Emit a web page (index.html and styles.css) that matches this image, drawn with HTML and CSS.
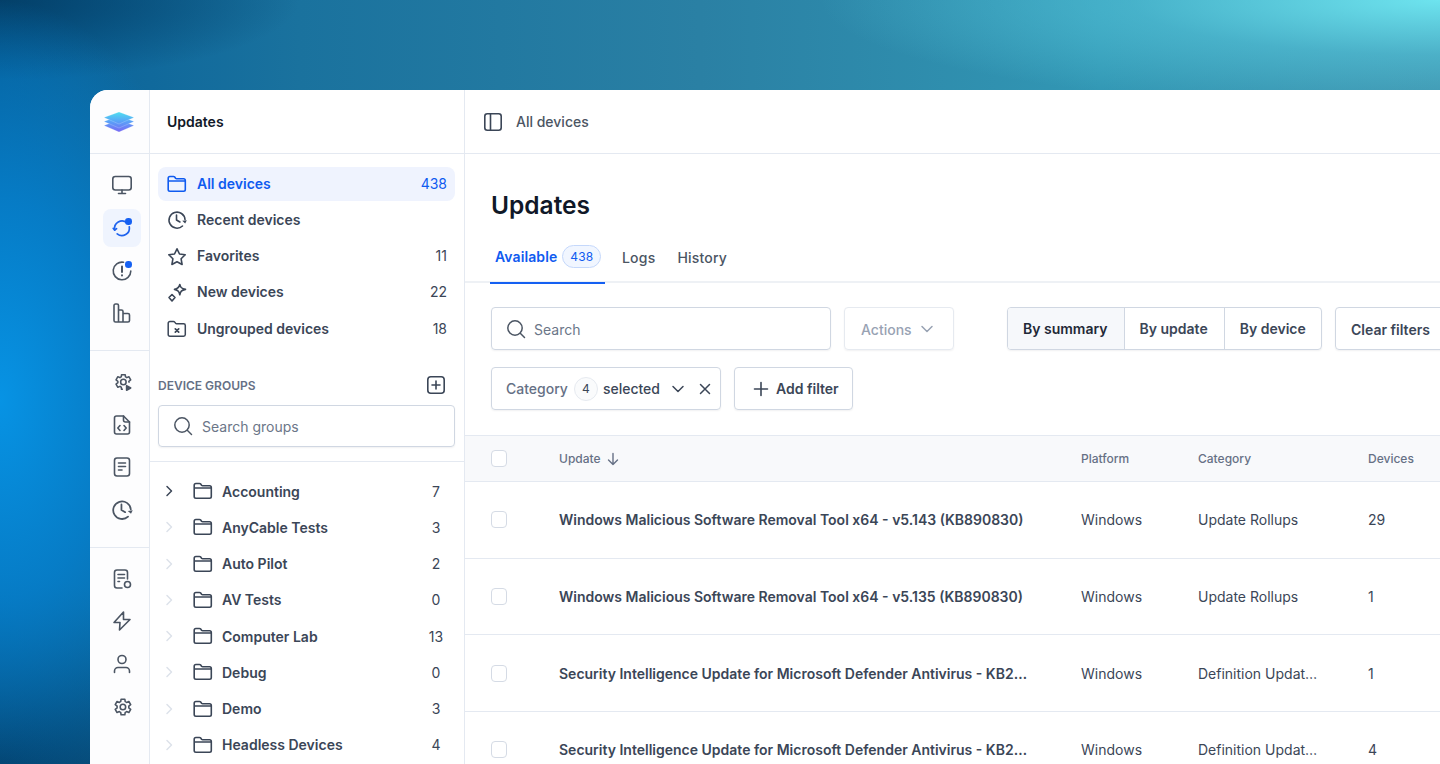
FILE: index.html
```html
<!DOCTYPE html>
<html lang="en">
<head>
    <meta charset="utf-8">
    <title>Updates</title>
    <link rel="stylesheet" href="styles.css">
</head>

<body>
    <svg class="sprite" width="0" height="0">
        <symbol id="folder" viewBox="0 0 20 20"><path d="M1.2 4.2c0-1 .8-1.7 1.7-1.7h3.5c.5 0 1 .2 1.3.6l1 1.3c.2.3.5.4.9.4h7c1 0 1.700.8 1.700 1.700v9c0 1-.8 1.700-1.700 1.700H2.900c-1 0-1.700-.8-1.700-1.700z M1.200 7h17.600" fill="none" stroke="currentColor" stroke-width="1.600"/></symbol>
        <symbol id="chev" viewBox="0 0 12 12"><path d="M4 1.500 8.500 6 4 10.500" fill="none" stroke="currentColor" stroke-width="1.500" stroke-linecap="round" stroke-linejoin="round"/></symbol>
        <symbol id="down" viewBox="0 0 14 14"><path d="M2 4.500 7 9.500l5-5" fill="none" stroke="currentColor" stroke-width="1.500" stroke-linecap="round" stroke-linejoin="round"/></symbol>
        <symbol id="search" viewBox="0 0 20 20"><circle cx="9" cy="9" r="7.200" fill="none" stroke="currentColor" stroke-width="1.500"/><path d="m14.500 14.500 4 4" fill="none" stroke="currentColor" stroke-width="1.500" stroke-linecap="round"/></symbol>
        <symbol id="clock" viewBox="0 0 20 20"><path d="M18 9.500A8 8 0 1 0 15.500 16M9.500 5v5l3.400 2" fill="none" stroke="currentColor" stroke-width="1.600" stroke-linecap="round" stroke-linejoin="round"/><path d="m15.200 10.800 3 2.600 1.600-3.200z" fill="currentColor"/></symbol>
        <linearGradient id="logo-fill" gradientUnits="userSpaceOnUse" x1="0" y1="1" x2="0" y2="21"><stop offset="0" stop-color="#4fe0f0"/><stop offset=".5" stop-color="#5a9ff8"/><stop offset="1" stop-color="#7868f4"/></linearGradient>
    </svg>

    <div class="page">
        <div class="app">

            <div class="rail">
                <div class="rail-logo">
                    <svg width="30" height="22" viewBox="0 0 30 22" fill="url(#logo-fill)" stroke="#fff" stroke-opacity=".5" stroke-width=".4">
                        <path d="M15 9 30 14.500 15 21 0 14.500z"/>
                        <path d="M15 5 30 10.500 15 17 0 10.500z"/>
                        <path d="M15 1 30 6.500 15 13 0 6.500z"/>
                    </svg>
                </div>
                <div class="rail-group">
                    <div class="rail-btn">
                        <svg width="22" height="22" viewBox="0 0 22 22" fill="none" stroke="currentColor" stroke-width="1.600" stroke-linecap="round"><rect x="1.800" y="2.500" width="18.400" height="13.500" rx="2.500"/><path d="M11 16v3.500M7.500 19.500h7"/></svg>
                    </div>
                    <div class="rail-btn is-active">
                        <svg width="22" height="22" viewBox="0 0 22 22" fill="none" stroke="currentColor" stroke-width="1.700" stroke-linecap="round" stroke-linejoin="round"><path d="M15.800 5.600A7.500 7.500 0 0 0 3.700 12.800"/><path d="M6.200 16.900A7.500 7.500 0 0 0 18.300 9.800"/><path d="M2.200 11.300 3.700 13.200l1.900-1.500"/></svg>
                        <span class="dot"></span>
                    </div>
                    <div class="rail-btn">
                        <svg width="22" height="22" viewBox="0 0 22 22" fill="none" stroke="currentColor" stroke-width="1.600" stroke-linecap="round"><path d="M19.800 11A8.800 8.800 0 1 1 12.500 2.300"/><path d="M11 6.500v5.500M11 15.300v.2" stroke-width="2"/></svg>
                        <span class="dot"></span>
                    </div>
                    <div class="rail-btn">
                        <svg width="22" height="22" viewBox="0 0 22 22" fill="none" stroke="currentColor" stroke-width="1.600" stroke-linejoin="round"><path d="M3 3.500c0-.8.600-1.500 1.500-1.500h1.500c.9 0 1.500.7 1.500 1.500V20H4.500C3.600 20 3 19.300 3 18.500zM7.500 8h3c.9 0 1.500.7 1.500 1.500V20H7.500zM12 11.500h5c.9 0 1.500.7 1.500 1.500v5.500c0 .8-.6 1.500-1.500 1.500h-5z"/></svg>
                    </div>
                </div>
                <div class="rail-group">
                    <div class="rail-btn">
                        <svg width="22" height="22" viewBox="0 0 24 24" fill="none" stroke="currentColor" stroke-width="1.700" stroke-linejoin="round"><path d="M19.500 12.800c.1-.5.100-1.100 0-1.600l2-1.500-2-3.500-2.300 1a8 8 0 0 0-1.400-.8L15.500 4h-4l-.3 2.400a8 8 0 0 0-1.400.8l-2.300-1-2 3.500 2 1.500a6 6 0 0 0 0 1.600l-2 1.500 2 3.500 2.300-1c.4.300.9.600 1.400.8l.3 2.400H13"/><circle cx="13.500" cy="12" r="3"/><path d="M17 16v5l4.500-2.500z" fill="currentColor"/></svg>
                    </div>
                    <div class="rail-btn">
                        <svg width="22" height="22" viewBox="0 0 22 22" fill="none" stroke="currentColor" stroke-width="1.600" stroke-linecap="round" stroke-linejoin="round"><path d="M3.500 4c0-1.100.9-2 2-2h7l6 6v10c0 1.100-.9 2-2 2h-11c-1.100 0-2-.9-2-2z"/><path d="M12.500 2v4c0 1.100.9 2 2 2h4M9 11.500 6.800 14 9 16.500M13 11.500l2.200 2.500-2.200 2.500"/></svg>
                    </div>
                    <div class="rail-btn">
                        <svg width="22" height="22" viewBox="0 0 22 22" fill="none" stroke="currentColor" stroke-width="1.600" stroke-linecap="round"><rect x="3.500" y="2" width="15" height="18" rx="2.500"/><path d="M7.500 7h7M7.500 10.500h7M7.500 14h3.500"/></svg>
                    </div>
                    <div class="rail-btn"><svg width="22" height="22"><use href="#clock"/></svg></div>
                </div>
                <div class="rail-group">
                    <div class="rail-btn">
                        <svg width="22" height="22" viewBox="0 0 22 22" fill="none" stroke="currentColor" stroke-width="1.600" stroke-linecap="round"><path d="M11 20H6c-1.400 0-2.500-1-2.500-2.500v-13C3.500 3 4.600 2 6 2h8c1.400 0 2.500 1 2.500 2.500V11"/><path d="M7 6.500h6.500M7 10h6.500M7 13.500h1.500"/><circle cx="16.500" cy="16.500" r="3"/></svg>
                    </div>
                    <div class="rail-btn">
                        <svg width="22" height="22" viewBox="0 0 22 22" fill="none" stroke="currentColor" stroke-width="1.600" stroke-linejoin="round"><path d="M12.500 2 3 12.500h6L8.500 20 19 9.500h-6.500z"/></svg>
                    </div>
                    <div class="rail-btn">
                        <svg width="22" height="22" viewBox="0 0 22 22" fill="none" stroke="currentColor" stroke-width="1.600" stroke-linecap="round"><circle cx="11" cy="6.500" r="4"/><path d="M3.500 19.500v-1.500c0-2 1.600-3.500 3.500-3.500h8c1.900 0 3.500 1.500 3.500 3.500v1.500"/></svg>
                    </div>
                    <div class="rail-btn">
                        <svg width="22" height="22" viewBox="0 0 24 24" fill="none" stroke="currentColor" stroke-width="1.700" stroke-linejoin="round"><path d="M19.400 12.900a7 7 0 0 0 0-1.800l2.100-1.600-2-3.500-2.500 1a8 8 0 0 0-1.500-.9L15.100 3.500H11l-.4 2.600c-.5.200-1 .5-1.500.9l-2.500-1-2 3.500 2.100 1.600a7 7 0 0 0 0 1.800l-2.100 1.600 2 3.500 2.500-1c.5.400 1 .7 1.500.9l.4 2.600h4.100l.4-2.600c.5-.2 1-.5 1.500-.9l2.500 1 2-3.500z"/><circle cx="13" cy="12" r="3"/></svg>
                    </div>
                </div>
            </div>

            <div class="side">
                <div class="side-head">Updates</div>
                <ul class="nav">
                    <li class="nav-item is-active"><svg class="nav-ico" width="20" height="20"><use href="#folder"/></svg><span class="grow">All devices</span><span class="count">438</span></li>
                    <li class="nav-item"><svg class="nav-ico" width="20" height="20"><use href="#clock"/></svg><span class="grow">Recent devices</span></li>
                    <li class="nav-item">
                        <svg class="nav-ico" width="20" height="20" viewBox="0 0 20 20" fill="none" stroke="currentColor" stroke-width="1.600" stroke-linejoin="round"><path d="m10 1.800 2.500 5.200 5.700.8-4.100 4 1 5.700L10 14.800l-5.100 2.700 1-5.700-4.100-4 5.700-.8z"/></svg>
                        <span class="grow">Favorites</span><span class="count">11</span>
                    </li>
                    <li class="nav-item">
                        <svg class="nav-ico" width="20" height="20" viewBox="0 0 20 20" fill="none" stroke="currentColor" stroke-width="1.600" stroke-linejoin="round"><path d="M12.800 1.500c.6 3 1.700 4.100 5.700 4.900-4 .8-5.100 1.900-5.700 5.400-.6-3.500-1.700-4.600-5.300-5.400 3.600-.8 4.700-1.900 5.300-4.900z"/><path d="m5 11.500 3 3-3 3.500-3-3.500z"/></svg>
                        <span class="grow">New devices</span><span class="count">22</span>
                    </li>
                    <li class="nav-item">
                        <svg class="nav-ico" width="20" height="20" viewBox="0 0 20 20" fill="none" stroke="currentColor" stroke-width="1.500" stroke-linecap="round"><path d="M1.200 4.200c0-1 .8-1.700 1.700-1.700h3.500c.5 0 1 .2 1.300.6l1 1.300c.2.300.5.400.9.400h7c1 0 1.700.8 1.700 1.700v9c0 1-.8 1.700-1.700 1.700H2.900c-1 0-1.700-.8-1.700-1.700z"/><path d="m8.300 9.800 3.400 3.400m0-3.400-3.400 3.400" stroke-width="1.700"/></svg>
                        <span class="grow">Ungrouped devices</span><span class="count">18</span>
                    </li>
                </ul>

                <div class="groups-head">
                    <span class="grow">DEVICE GROUPS</span>
                    <svg width="20" height="20" viewBox="0 0 20 20" fill="none" stroke="currentColor" stroke-width="1.600" stroke-linecap="round"><rect x="1.800" y="1.800" width="16.400" height="16.400" rx="3"/><path d="M10 6v8M6 10h8"/></svg>
                </div>
                <div class="groups-search">
                    <div class="field"><svg class="field-ico" width="20" height="20"><use href="#search"/></svg><span>Search groups</span></div>
                </div>
                <ul class="tree">
                    <li class="tree-row"><svg class="chev is-open" width="12" height="12"><use href="#chev"/></svg><svg class="nav-ico" width="20" height="20"><use href="#folder"/></svg><span class="grow">Accounting</span><span class="tree-count">7</span></li>
                    <li class="tree-row"><svg class="chev" width="12" height="12"><use href="#chev"/></svg><svg class="nav-ico" width="20" height="20"><use href="#folder"/></svg><span class="grow">AnyCable Tests</span><span class="tree-count">3</span></li>
                    <li class="tree-row"><svg class="chev" width="12" height="12"><use href="#chev"/></svg><svg class="nav-ico" width="20" height="20"><use href="#folder"/></svg><span class="grow">Auto Pilot</span><span class="tree-count">2</span></li>
                    <li class="tree-row"><svg class="chev" width="12" height="12"><use href="#chev"/></svg><svg class="nav-ico" width="20" height="20"><use href="#folder"/></svg><span class="grow">AV Tests</span><span class="tree-count">0</span></li>
                    <li class="tree-row"><svg class="chev" width="12" height="12"><use href="#chev"/></svg><svg class="nav-ico" width="20" height="20"><use href="#folder"/></svg><span class="grow">Computer Lab</span><span class="tree-count">13</span></li>
                    <li class="tree-row"><svg class="chev" width="12" height="12"><use href="#chev"/></svg><svg class="nav-ico" width="20" height="20"><use href="#folder"/></svg><span class="grow">Debug</span><span class="tree-count">0</span></li>
                    <li class="tree-row"><svg class="chev" width="12" height="12"><use href="#chev"/></svg><svg class="nav-ico" width="20" height="20"><use href="#folder"/></svg><span class="grow">Demo</span><span class="tree-count">3</span></li>
                    <li class="tree-row"><svg class="chev" width="12" height="12"><use href="#chev"/></svg><svg class="nav-ico" width="20" height="20"><use href="#folder"/></svg><span class="grow">Headless Devices</span><span class="tree-count">4</span></li>
                </ul>
            </div>

            <div class="main">
                <div class="main-head">
                    <svg width="20" height="20" viewBox="0 0 20 20" fill="none" stroke="currentColor" stroke-width="1.600"><rect x="1.800" y="1.800" width="16.400" height="16.400" rx="2.500"/><path d="M7.500 1.800v16.400"/></svg>
                    <span>All devices</span>
                </div>

                <h1 class="title">Updates</h1>

                <div class="tabs">
                    <div class="tab is-active">Available <span class="tab-badge">438</span></div>
                    <div class="tab">Logs</div>
                    <div class="tab">History</div>
                </div>

                <div class="toolbar">
                    <div class="field field-main"><svg class="field-ico" width="20" height="20"><use href="#search"/></svg><span>Search</span></div>
                    <div class="btn btn-off">Actions <svg width="14" height="14"><use href="#down"/></svg></div>
                    <div class="seg">
                        <div class="seg-item is-on">By summary</div>
                        <div class="seg-item">By update</div>
                        <div class="seg-item">By device</div>
                    </div>
                    <div class="btn btn-clear">Clear filters</div>
                </div>

                <div class="filters">
                    <div class="btn btn-filter">
                        <span class="muted">Category</span><span class="circle">4</span><span>selected</span>
                        <svg class="f-down" width="14" height="14"><use href="#down"/></svg>
                        <svg width="12" height="12" viewBox="0 0 12 12" fill="none" stroke="currentColor" stroke-width="1.500" stroke-linecap="round"><path d="m1.500 1.500 9 9m0-9-9 9"/></svg>
                    </div>
                    <div class="btn btn-add">
                        <svg width="16" height="16" viewBox="0 0 16 16" fill="none" stroke="currentColor" stroke-width="1.600" stroke-linecap="round"><path d="M8 1.500v13M1.500 8h13"/></svg>
                        Add filter
                    </div>
                </div>

                <div class="table">
                    <div class="t-row t-head">
                        <div class="t-check"><span class="box"></span></div>
                        <div class="t-sort">Update <svg width="14" height="14" viewBox="0 0 14 14" fill="none" stroke="currentColor" stroke-width="1.400" stroke-linecap="round" stroke-linejoin="round"><path d="M7 1.500v11M2.500 8 7 12.500 11.500 8"/></svg></div>
                        <div>Platform</div>
                        <div>Category</div>
                        <div>Devices</div>
                    </div>
                    <div class="t-row">
                        <div class="t-check"><span class="box"></span></div>
                        <div class="t-name">Windows Malicious Software Removal Tool x64 - v5.143 (KB890830)</div>
                        <div>Windows</div>
                        <div>Update Rollups</div>
                        <div>29</div>
                    </div>
                    <div class="t-row">
                        <div class="t-check"><span class="box"></span></div>
                        <div class="t-name">Windows Malicious Software Removal Tool x64 - v5.135 (KB890830)</div>
                        <div>Windows</div>
                        <div>Update Rollups</div>
                        <div>1</div>
                    </div>
                    <div class="t-row">
                        <div class="t-check"><span class="box"></span></div>
                        <div class="t-name">Security Intelligence Update for Microsoft Defender Antivirus - KB2…</div>
                        <div>Windows</div>
                        <div>Definition Updat…</div>
                        <div>1</div>
                    </div>
                    <div class="t-row">
                        <div class="t-check"><span class="box"></span></div>
                        <div class="t-name">Security Intelligence Update for Microsoft Defender Antivirus - KB2…</div>
                        <div>Windows</div>
                        <div>Definition Updat…</div>
                        <div>4</div>
                    </div>
                </div>
            </div>

        </div>
    </div>
</body>
</html>
```

FILE: styles.css
```css
* { box-sizing: border-box; }

body {
    margin: 0;
    font-family: Inter, "Liberation Sans", sans-serif;
    font-size: 14px;
    color: #3b4657;
}

ul { list-style: none; margin: 0; padding: 0; }

.sprite { position: absolute; }

.grow { flex: 1; }

.page {
    width: 1440px;
    height: 764px;
    overflow: hidden;
    padding: 90px 0 0 90px;
    background:
        radial-gradient(ellipse 620px 110px at 1440px 0, rgba(112, 232, 242, .95) 0%, rgba(90, 205, 225, .5) 50%, rgba(70, 170, 200, 0) 100%),
        radial-gradient(ellipse 230px 400px at 0 400px, #0793e4 0%, rgba(6, 128, 205, .85) 50%, rgba(5, 100, 160, 0) 100%),
        radial-gradient(ellipse 300px 80px at 0 0, rgba(3, 58, 96, .85) 0%, rgba(3, 58, 96, 0) 100%),
        radial-gradient(ellipse 240px 190px at 0 764px, rgba(3, 58, 98, .95) 0%, rgba(3, 58, 98, 0) 100%),
        linear-gradient(90deg, #06609a 0, #1a729e 300px, #2a80a4 700px, #3297b4 1100px, #3e93ae 1440px);
}

.app {
    display: flex;
    width: 1400px;
    height: 674px;
    background: #fff;
    border-radius: 18px 0 0 0;
    overflow: hidden;
}

/* icon rail */
.rail {
    flex: none;
    width: 60px;
    border-right: 1px solid #e4e9f1;
    background: #fdfdfe;
    color: #4b5563;
}

.rail-logo {
    height: 64px;
    border-bottom: 1px solid #e4e9f1;
    display: flex;
    align-items: center;
    justify-content: center;
    padding-right: 1px;
}

.rail-group {
    display: flex;
    flex-direction: column;
    align-items: center;
    gap: 4.8px;
    padding: 12px 0 17.400px 5px;
    border-bottom: 1px solid #e4e9f1;
}

.rail-group:last-child { border-bottom: none; }

.rail-btn {
    position: relative;
    width: 38px;
    height: 38px;
    border-radius: 8px;
    display: flex;
    align-items: center;
    justify-content: center;
}

.rail-btn.is-active { background: #eff4fe; color: #1f63ee; }

.dot {
    position: absolute;
    top: 9.500px;
    right: 9.500px;
    width: 6.500px;
    height: 6.500px;
    border-radius: 50%;
    background: #1560f2;
}

/* groups sidebar */
.side {
    flex: none;
    width: 315px;
    border-right: 1px solid #e4e9f1;
}

.side-head {
    height: 64px;
    border-bottom: 1px solid #e4e9f1;
    padding: 0 17px;
    display: flex;
    align-items: center;
    font-weight: 600;
    color: #111827;
}

.nav {
    padding: 13px 9px 0 8px;
    display: flex;
    flex-direction: column;
    gap: 2.25px;
}

.nav-item {
    height: 34px;
    display: flex;
    align-items: center;
    padding: 0 8px 0 9px;
    border-radius: 8px;
    font-weight: 600;
}

.nav-item span { margin-top: -2px; }

.nav-ico { flex: none; margin-right: 10px; }

.nav-item .count { font-weight: 400; }

.nav-item.is-active { background: #eff3fe; color: #0f5bf0; }

.groups-head {
    display: flex;
    align-items: center;
    padding: 0 18px 0 8px;
    margin-top: 29px;
    height: 20px;
    font-size: 12px;
    font-weight: 600;
    color: #667085;
}

.groups-head svg { color: #3b4657; }

.groups-search {
    padding: 10px 9px 14px 8px;
    border-bottom: 1px solid #e4e9f1;
}

.field {
    height: 43px;
    border: 1px solid #d0d7e2;
    border-radius: 4px;
    display: flex;
    align-items: center;
    padding-left: 14px;
    color: #6b7688;
    box-shadow: 0 1px 2px rgba(16, 24, 40, .06);
}

.groups-search .field { height: 42px; }
.groups-search .field-ico { margin-right: 9px; }

.field-ico { margin-right: 8px; flex: none; color: #4b5563; }

.tree {
    padding-top: 11px;
    display: flex;
    flex-direction: column;
}

.tree-row {
    height: 36.25px;
    display: flex;
    align-items: center;
    padding: 0 19px 0 13px;
    font-weight: 600;
}

.tree-row .nav-ico { margin-right: 9px; }

.chev { color: #dde2ea; margin-right: 18px; flex: none; }
.chev.is-open { color: #3b4657; }

.tree-count { font-weight: 400; width: 18px; text-align: center; }

/* main column */
.main {
    flex: none;
    width: 1025px;
}

.main-head {
    height: 64px;
    border-bottom: 1px solid #e4e9f1;
    padding: 0 18px;
    display: flex;
    align-items: center;
    gap: 13px;
    font-weight: 500;
    color: #4b5563;
}

.main-head svg { color: #3b4657; }

.title {
    margin: 35px 0 0 26px;
    font-size: 24.5px;
    line-height: 32px;
    font-weight: 600;
    color: #101828;
}

.tabs {
    margin-top: 17px;
    height: 45px;
    padding-left: 25px;
    display: flex;
    gap: 22px;
    border-bottom: 2px solid #eef1f5;
}

.tab {
    height: 46px;
    display: flex;
    align-items: center;
    padding-bottom: 7px;
    font-weight: 500;
    color: #4b5563;
    letter-spacing: .2px;
}

.tab.is-active {
    padding: 0 4px 7px 5px;
    width: 115px;
    margin-right: -5px;
    color: #0f5bf0;
    font-weight: 600;
    letter-spacing: .1px;
    border-bottom: 2px solid #1560f2;
    gap: 5px;
}

.tab-badge {
    height: 23px;
    padding: 0 7px;
    border: 1px solid #c5d8fb;
    border-radius: 12px;
    background: #f1f6ff;
    font-size: 12px;
    font-weight: 400;
    line-height: 21px;
}

.toolbar {
    margin-top: 24px;
    padding-left: 26px;
    display: flex;
    gap: 13px;
}

.field-main { width: 340px; flex: none; padding-top: 1px; }

.btn {
    height: 43px;
    flex: none;
    display: flex;
    align-items: center;
    border: 1px solid #d0d7e2;
    border-radius: 4px;
    font-weight: 600;
    box-shadow: 0 1px 2px rgba(16, 24, 40, .06);
}

.btn-off {
    width: 110px;
    padding: 1px 0 0 16px;
    gap: 8px;
    color: #98a2b3;
    font-weight: 500;
    border-color: #e6eaf0;
}

.seg {
    flex: none;
    margin-left: 40px;
    width: 315px;
    height: 43px;
    display: flex;
    border: 1px solid #d0d7e2;
    border-radius: 4px;
    overflow: hidden;
    box-shadow: 0 1px 2px rgba(16, 24, 40, .06);
}

.seg-item {
    padding: 0 16px 1px 15px;
    display: flex;
    align-items: center;
    font-weight: 600;
    border-left: 1px solid #d0d7e2;
    flex: none;
}

.seg-item:first-child { border-left: none; }
.seg-item.is-on { background: #f6f8fb; color: #1f2937; }

.btn-clear { padding: 1px 15px 0; width: 120px; }

.filters {
    margin-top: 17px;
    padding-left: 26px;
    display: flex;
    gap: 13px;
}

.btn-filter {
    width: 230px;
    padding-left: 14px;
    font-weight: 500;
}

.muted { color: #667085; }

.circle {
    width: 24px;
    height: 24px;
    margin: 0 5px 0 6px;
    border: 1px solid #e6eaf0;
    border-radius: 50%;
    background: #fafbfc;
    display: flex;
    align-items: center;
    justify-content: center;
    font-size: 12px;
    font-weight: 400;
}

.f-down { margin: 0 14px 0 11px; }

.btn-add { width: 119px; padding-left: 18px; gap: 7px; }

.table { margin-top: 25px; }

.t-row {
    display: grid;
    grid-template-columns: 94px 522px 117px 170px 1fr;
    align-items: center;
    height: 76.67px;
    border-bottom: 1px solid #e4e9f1;
}

.t-head {
    height: 47px;
    background: #f8f9fb;
    border-top: 1px solid #e4e9f1;
    font-size: 12px;
    font-weight: 500;
    color: #667085;
}

.t-check { padding-left: 26px; display: flex; }

.box {
    width: 16px;
    height: 17px;
    background: #fff;
    border: 1px solid #d5dbe5;
    border-radius: 4px;
}

.t-sort { display: flex; align-items: center; gap: 5px; }

.t-name {
    font-weight: 600;
    white-space: nowrap;
}
```
